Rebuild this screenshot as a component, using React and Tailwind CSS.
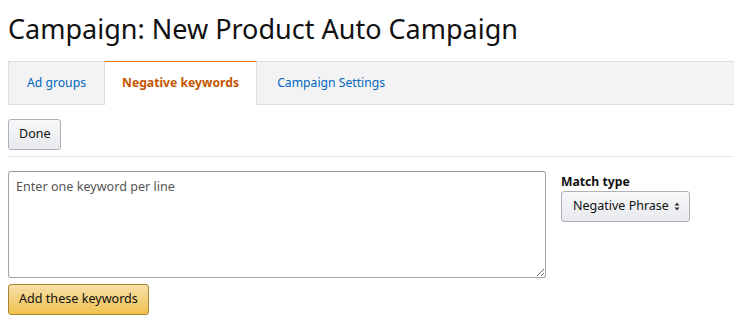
import React from 'react';

function Tab({ label, active, first }) {
  if (active) {
    return (
      <div className="h-[44px] -mb-px -mt-px px-[17px] flex items-center bg-white border-t border-t-[#e47911] border-x border-x-[#dddddd] text-[12.2px] font-bold text-[#c45500]">
        {label}
      </div>
    );
  }
  return (
    <div className={`h-[42px] pt-px flex items-center text-[12.2px] text-[#0066c0] ${first ? 'px-[18px]' : 'px-[20px]'}`}>
      {label}
    </div>
  );
}

export default function App() {
  return (
    <div className="bg-white min-h-screen w-[734px] overflow-hidden" style={{ fontFamily: '"Noto Sans", "Open Sans", Arial, sans-serif' }}>
      {/* breadcrumb, mostly scrolled off */}
      <div className="pl-2 -mt-[17px] h-[20px] leading-[18px] text-[12px] text-[#666666] whitespace-nowrap">
        Campaigns › New Product Auto Campaign › Negative keywords
      </div>

      <h1 className="pl-2 mt-[8px] text-[27px] leading-[36px] text-[#111111] whitespace-nowrap">
        Campaign: New Product Auto Campaign
      </h1>

      {/* Tabs */}
      <div className="mt-[14px] ml-2 flex items-end bg-[#f3f3f3] border-t border-b border-l border-[#dddddd] h-[44px]">
        <Tab label="Ad groups" first />
        <Tab label="Negative keywords" active />
        <Tab label="Campaign Settings" />
      </div>

      <div className="pl-2 pt-[14px]">
        <button className="h-[31px] px-[10px] text-[12.5px] text-[#111111] rounded-[3px] border border-[#adb1b8] bg-gradient-to-b from-[#f7f8fa] to-[#e7e9ec]">
          Done
        </button>
      </div>

      <div className="ml-2 mt-[6px] border-t border-[#e7e7e7]" />

      <div className="pl-2 pt-[14px] flex">
        <div className="flex flex-col">
          <textarea
            className="w-[538px] h-[107px] px-[7px] py-[6px] text-[12.6px] text-[#111111] placeholder:text-[#555555] border border-[#a6a6a6] border-t-[#949494] rounded-[3px] outline-none resize-y"
            placeholder="Enter one keyword per line"
          />
          <div className="mt-[6px]">
            <button className="h-[31px] px-[10px] text-[12.6px] text-[#111111] rounded-[3px] border border-[#a88734] bg-gradient-to-b from-[#f7dfa5] to-[#f0c14b]">
              Add these keywords
            </button>
          </div>
        </div>

        <div className="ml-[15px] pt-[2px]">
          <div className="text-[12.2px] font-bold text-[#111111] leading-[17px]">Match type</div>
          <div className="mt-[1px] w-[129px] h-[31px] pl-[11px] pr-[9px] flex items-center justify-between rounded-[3px] border border-[#adb1b8] bg-gradient-to-b from-[#f7f8fa] to-[#e7e9ec] text-[12.5px] text-[#111111]">
            <span>Negative Phrase</span>
            <svg width="6" height="9" viewBox="0 0 6 9">
              <path d="M3 0.5 L5.5 3.5 L0.5 3.5 Z" fill="#333333" />
              <path d="M3 8.5 L5.5 5.5 L0.5 5.5 Z" fill="#333333" />
            </svg>
          </div>
        </div>
      </div>
    </div>
  );
}
